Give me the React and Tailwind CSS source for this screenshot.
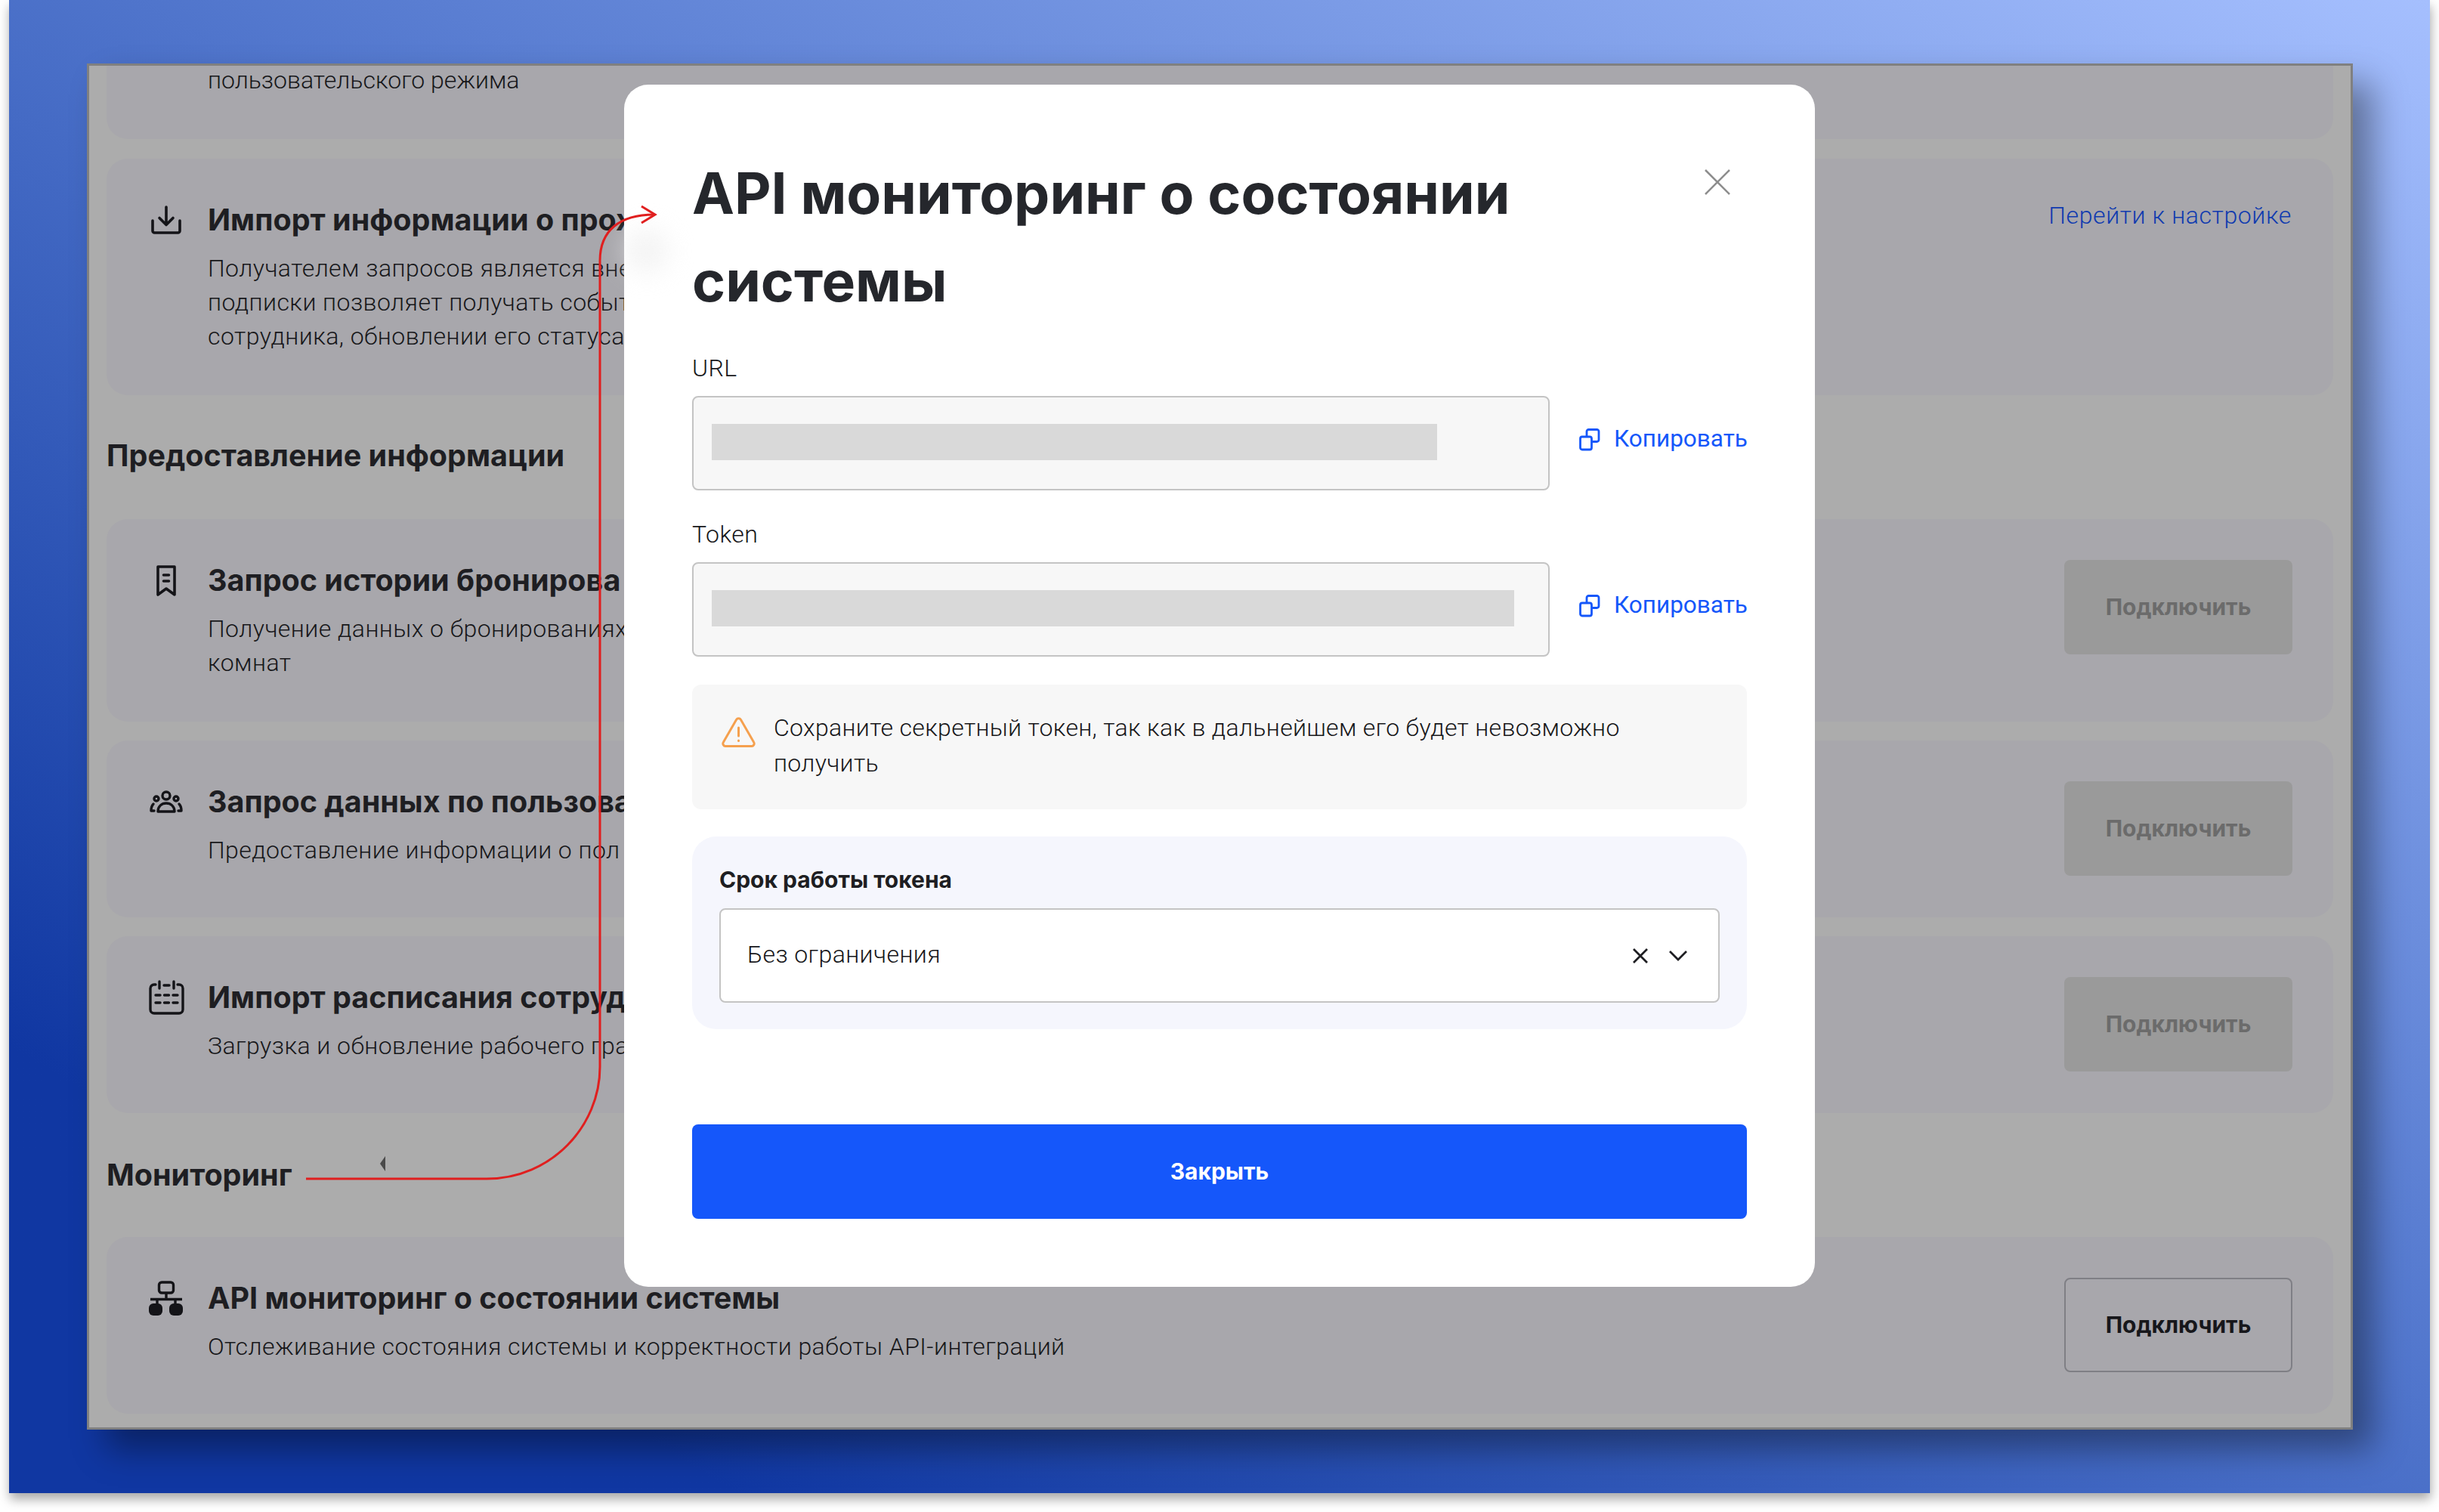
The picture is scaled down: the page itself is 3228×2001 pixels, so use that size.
const inter = { fontFamily: "Inter, sans-serif" }

function DownloadIcon() {
  return (
    <svg width="40" height="38" viewBox="0 0 40 38" fill="none" stroke="#141418" strokeWidth="3.6" strokeLinecap="round" strokeLinejoin="round">
      <path d="M20 2v23M11 16.5l9 9 9-9" />
      <path d="M2 20v13.5a2.5 2.5 0 0 0 2.5 2.5h31a2.5 2.5 0 0 0 2.5-2.5V20" />
    </svg>
  )
}

function BookmarkIcon() {
  return (
    <svg width="26" height="41" viewBox="0 0 26 41" fill="none" stroke="#141418" strokeWidth="3.6" strokeLinecap="round" strokeLinejoin="round">
      <path d="M2 2h22v37l-11-8-11 8z" />
      <path d="M9.5 13h7M9.5 21h7" />
    </svg>
  )
}

function PeopleIcon() {
  return (
    <svg width="44" height="30" viewBox="0 0 44 30" fill="none" stroke="#141418" strokeWidth="3.4" strokeLinecap="round" strokeLinejoin="round">
      <circle cx="22" cy="7" r="5" />
      <circle cx="9" cy="11" r="3" />
      <circle cx="35" cy="11" r="3" />
      <path d="M11 28c0-7 5-11 11-11s11 4 11 11z" />
      <path d="M5 18c-2 2-3 5-3 9h4M39 18c2 2 3 5 3 9h-4" />
    </svg>
  )
}

function CalendarIcon() {
  return (
    <svg width="47" height="46" viewBox="0 0 47 46" fill="none" stroke="#141418" strokeWidth="3.4" strokeLinecap="round" strokeLinejoin="round">
      <path d="M9 6H7a5 5 0 0 0-5 5v28a5 5 0 0 0 5 5h33a5 5 0 0 0 5-5V11a5 5 0 0 0-5-5h-2" />
      <path d="M14 2v9M33 2v9M20 7h7" />
      <path d="M9 20h6M20.5 20h6M32 20h6M9 30h6M20.5 30h6M32 30h6" />
    </svg>
  )
}

function NetworkIcon() {
  return (
    <svg width="46" height="46" viewBox="0 0 46 46" fill="none">
      <rect x="13.5" y="2" width="19" height="14" rx="3.5" stroke="#141418" strokeWidth="3.4" />
      <path d="M23 16v8M2 24.5h42M11 24v8M35 24v8" stroke="#141418" strokeWidth="3.4" />
      <rect x="0" y="30" width="18" height="16" rx="6" fill="#141418" />
      <rect x="27" y="30" width="18" height="16" rx="6" fill="#141418" />
    </svg>
  )
}

function CopyIcon() {
  return (
    <svg width="28" height="30" viewBox="0 0 28 30" fill="none" stroke="#1557fa" strokeWidth="2.8" strokeLinejoin="round">
      <rect x="1.5" y="11" width="15" height="17" rx="2.5" />
      <path d="M10 11V4a2.5 2.5 0 0 1 2.5-2.5h11A2.5 2.5 0 0 1 26 4v11a2.5 2.5 0 0 1-2.5 2.5h-7" />
    </svg>
  )
}

function WarningIcon() {
  return (
    <svg width="45" height="40" viewBox="0 0 45 40" fill="none" stroke="#f5a04e" strokeWidth="3" strokeLinecap="round" strokeLinejoin="round">
      <path d="M19.5 3.5a3.5 3.5 0 0 1 6 0l17 29.5a3.5 3.5 0 0 1-3 5.5h-34a3.5 3.5 0 0 1-3-5.5z" />
      <path d="M22.5 14v11M22.5 31v.5" />
    </svg>
  )
}

function Card({ icon, title, desc, action }) {
  return (
    <div className="flex items-start justify-between rounded-[28px] bg-[#a8a7ac] p-[55px] pr-[54px]">
      <div className="flex">
        <div className="flex h-[52px] w-[48px] items-center justify-center">{icon}</div>
        <div className="ml-[31px]">
          <div className="text-[39.5px] leading-[52px] font-bold text-[#1e1e22]" style={inter}>{title}</div>
          <div className="mt-[16px] text-[32px] leading-[45px] font-light tracking-[0.45px] text-[#17171a]">{desc}</div>
        </div>
      </div>
      {action}
    </div>
  )
}

function DisabledButton() {
  return (
    <div className="-mt-[1px] flex h-[125px] w-[302px] flex-none items-center justify-center rounded-[8px] bg-[#9a9a9a] text-[30px] font-bold text-[#6b6b6b]" style={inter}>
      Подключить
    </div>
  )
}

function CopyField({ label, barWidth }) {
  return (
    <>
      <div className="text-[32px] leading-[40px] font-light tracking-[0.45px] text-[#17171a]">{label}</div>
      <div className="mt-[17px] flex items-center">
        <div className="flex h-[125px] w-[1135px] flex-none items-center rounded-[8px] border-2 border-[#c4c4c4] bg-[#f7f7f7] pb-[3px] pl-[24px]">
          <div className="h-[48px] bg-[#d9d9d9]" style={{ width: barWidth }}></div>
        </div>
        <div className="mb-[10px] ml-[39px] flex items-center gap-[18px] text-[31.5px] text-[#1557fa]">
          <CopyIcon />
          <span className="-mt-[2px]">Копировать</span>
        </div>
      </div>
    </>
  )
}

export default function App() {
  return (
    <div className="relative h-[2001px] w-[3228px] overflow-hidden bg-white" style={{ fontFamily: "Roboto, sans-serif" }}>
      <div className="ml-[12px] h-[1976px] w-[3204px] bg-linear-to-tr from-[#1037a2] from-[15%] to-[#a5bffe] pt-[84px] pl-[103px] shadow-[1px_8px_14px_rgba(0,0,0,0.35)]">
        <div className="h-[1808px] w-[2999px] overflow-hidden border-[3px] border-[#808080] bg-[#acacac] px-[23px] shadow-[26px_26px_42px_rgba(0,0,0,0.38)]">
          <div className="-mt-[58px] rounded-[28px] bg-[#a8a7ac] py-[55px] pl-[134px] text-[32px] leading-[45px] font-light text-[#17171a]">
            пользовательского режима
          </div>
          <div className="mt-[26px]">
            <Card
              icon={<DownloadIcon />}
              title="Импорт информации о прох"
              desc={
                <>
                  Получателем запросов является вне
                  <br />
                  подписки позволяет получать событ
                  <br />
                  сотрудника, обновлении его статуса
                </>
              }
              action={<div className="-mt-[2px] mr-[1px] flex-none text-[32px] leading-[45px] font-light tracking-[0.6px] text-[#103bb0]">Перейти к настройке</div>}
            />
          </div>
          <div className="mt-[56px] mb-[60px] text-[39.5px] leading-[48px] font-bold text-[#1e1e22]" style={inter}>Предоставление информации</div>
          <div className="flex flex-col gap-[25px]">
            <Card
              icon={<BookmarkIcon />}
              title="Запрос истории бронирова"
              desc={
                <>
                  Получение данных о бронированиях
                  <br />
                  комнат
                </>
              }
              action={<DisabledButton />}
            />
            <Card icon={<PeopleIcon />} title="Запрос данных по пользова" desc="Предоставление информации о пол" action={<DisabledButton />} />
            <Card icon={<CalendarIcon />} title="Импорт расписания сотруд" desc="Загрузка и обновление рабочего гра" action={<DisabledButton />} />
          </div>
          <div className="mt-[58px] mb-[58px] text-[39.5px] leading-[48px] font-bold text-[#1e1e22]" style={inter}>Мониторинг</div>
          <Card
            icon={<NetworkIcon />}
            title="API мониторинг о состоянии системы"
            desc="Отслеживание состояния системы и корректности работы API-интеграций"
            action={
              <div className="-mt-[1px] flex h-[125px] w-[302px] flex-none items-center justify-center rounded-[8px] border-2 border-[#7f7f85] text-[30px] font-bold text-[#17171b]" style={inter}>
                Подключить
              </div>
            }
          />
        </div>
      </div>

      {/* modal */}
      <div className="absolute top-[112px] left-[826px] w-[1576px] rounded-[32px] bg-white px-[90px] pt-[86px] pb-[90px] text-[#17171a]">
        <div className="absolute top-[190px] left-[0px] h-[60px] w-[60px] rounded-full bg-[#ededed] opacity-60 blur-[16px]"></div>
        <div className="relative flex items-start justify-between">
          <div className="w-[1300px] text-[75px] leading-[116px] font-bold text-[#25272c]" style={inter}>API мониторинг о состоянии системы</div>
          <svg className="mt-[25px] mr-[21px]" width="36" height="36" viewBox="0 0 36 36" fill="none" stroke="#8d8d8d" strokeWidth="2.5">
            <path d="M2 2l32 32M34 2L2 34" />
          </svg>
        </div>
        <div className="mt-[37px]">
          <CopyField label="URL" barWidth={960} />
        </div>
        <div className="mt-[38px]">
          <CopyField label="Token" barWidth={1062} />
        </div>
        <div className="mt-[37px] flex h-[165px] rounded-[12px] bg-[#f7f7f7] pt-[34px] pl-[39px]">
          <div className="mt-[9px] flex-none"><WarningIcon /></div>
          <div className="ml-[24px] text-[32px] leading-[47px] font-light tracking-[0.33px]">
            Сохраните секретный токен, так как в дальнейшем его будет невозможно
            <br />
            получить
          </div>
        </div>
        <div className="mt-[36px] h-[255px] rounded-[32px] bg-[#f5f6fd] px-[36px] pt-[38px]">
          <div className="-mt-[1px] text-[30px] leading-[40px] font-bold text-[#1e1e22]" style={inter}>Срок работы токена</div>
          <div className="mt-[18px] flex h-[125px] items-center justify-between rounded-[8px] border-2 border-[#c4c4c4] bg-white pr-[40px] pl-[35px] text-[32px] font-light tracking-[0.4px]">
            <span className="-mt-[4px]">Без ограничения</span>
            <div className="flex items-center gap-[26px]">
              <svg width="22" height="22" viewBox="0 0 22 22" fill="none" stroke="#1e1e22" strokeWidth="2.8"><path d="M2 2l18 18M20 2L2 20" /></svg>
              <svg width="26" height="16" viewBox="0 0 26 16" fill="none" stroke="#1e1e22" strokeWidth="2.8"><path d="M2 2l11 11L24 2" /></svg>
            </div>
          </div>
        </div>
        <div className="mt-[126px] flex h-[125px] items-center justify-center rounded-[8px] bg-[#1557fa] text-[30px] font-bold text-white" style={inter}>
          Закрыть
        </div>
      </div>

      {/* red annotation arrow */}
      <svg className="pointer-events-none absolute top-0 left-0" width="3228" height="2001" fill="none">
        <path d="M405 1560H644C730 1560 794 1490 794 1412V345C794 305 820 284 866 284" stroke="#e01f1f" strokeWidth="3" />
        <path d="M849 273L867 284L849 295" stroke="#e01f1f" strokeWidth="3" />
        <path d="M510 1530L503 1540L510 1550z" fill="#4a4a4a" />
      </svg>
    </div>
  )
}
